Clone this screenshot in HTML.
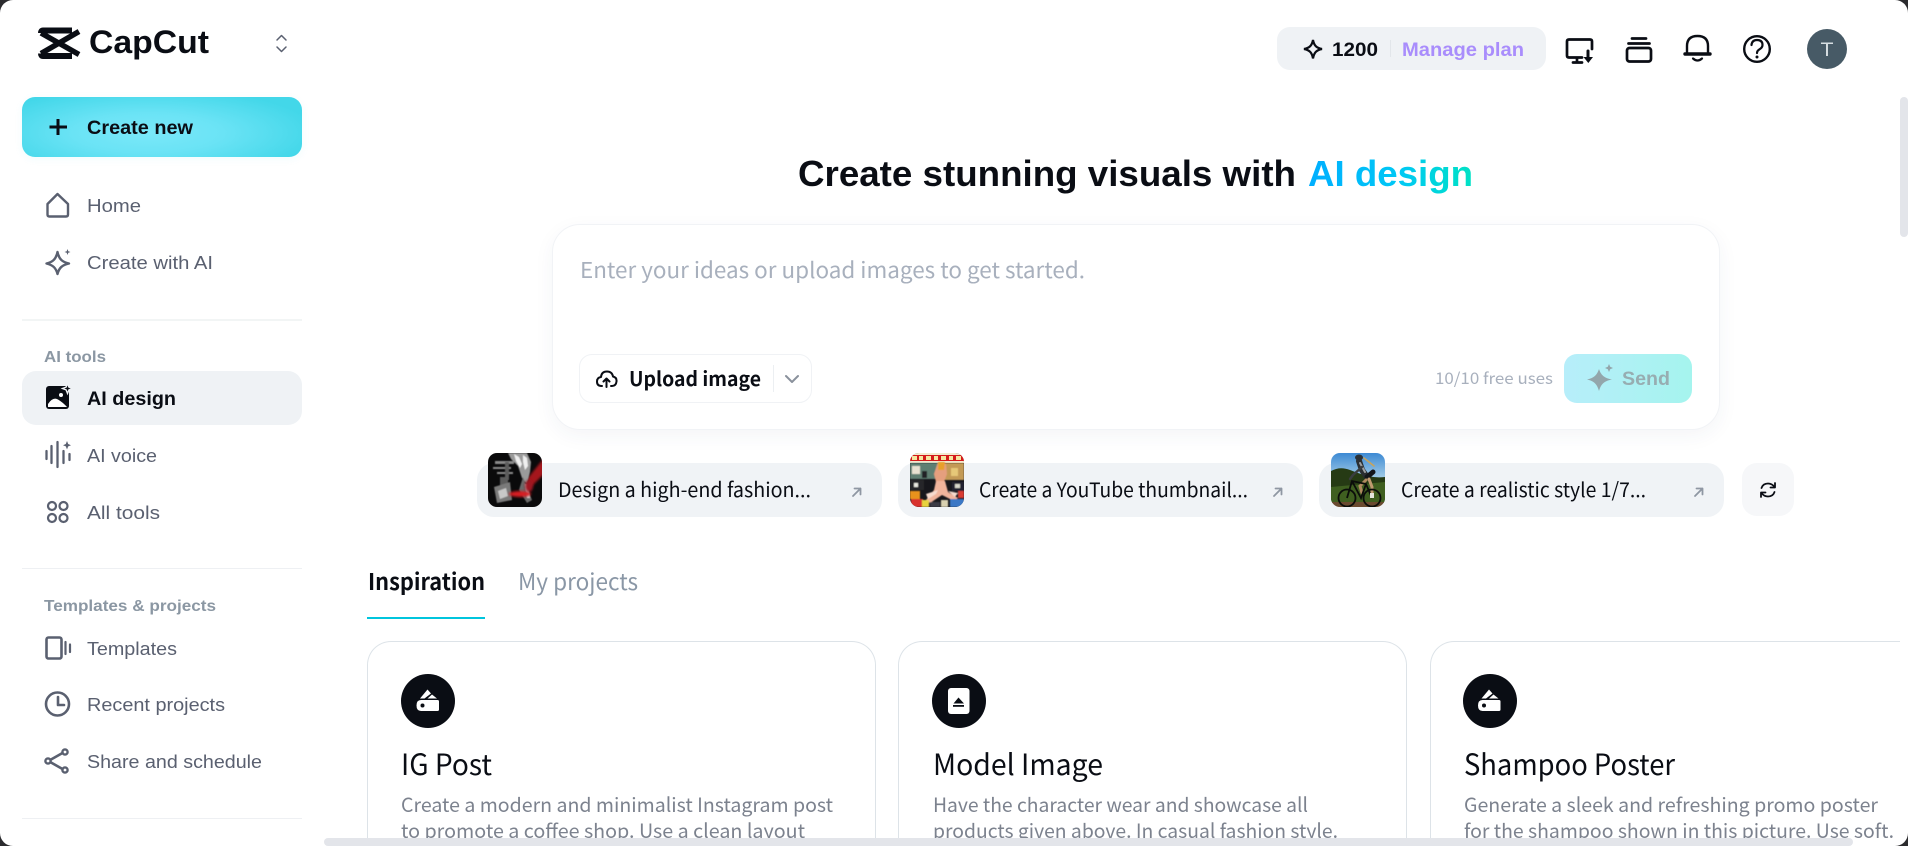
<!DOCTYPE html>
<html lang="en">
<head>
<meta charset="utf-8">
<title>CapCut</title>
<style>
html,body{margin:0;padding:0;width:1908px;height:846px;overflow:hidden;background:#2b2b2e;}
#page{position:absolute;left:0;top:0;width:1908px;height:846px;background:#fff;border-radius:13px;overflow:hidden;font-family:"Liberation Sans",sans-serif;}
.b{position:absolute;box-sizing:border-box;}
svg.o{position:absolute;left:0;top:0;width:1908px;height:846px;display:block;}
text{font-family:"Liberation Sans",sans-serif;}
.n text,text.n{font-family:"Liberation Sans","Noto Sans CJK SC",sans-serif;}
.s text,text.s{font-family:"Noto Sans CJK SC","Liberation Sans",sans-serif;}
.card{border:1px solid #dde3e8;border-bottom:0;border-radius:24px 24px 0 0;height:205px;}
</style>
</head>
<body>
<div id="page">
  <!-- boxes -->
  <div class="b" style="left:22px;top:97px;width:280px;height:60px;border-radius:13px;background:radial-gradient(ellipse 60% 75% at 45% 60%,#7ae8f9 0%,#6ae3f5 45%,#43d7e9 100%);box-shadow:0 2px 8px rgba(70,215,235,.08)"></div>
  <div class="b" style="left:22px;top:319px;width:280px;height:2px;background:#f2f5f5"></div>
  <div class="b" style="left:22px;top:371px;width:280px;height:54px;border-radius:14px;background:#eff2f5"></div>
  <div class="b" style="left:22px;top:568px;width:280px;height:1px;background:#eef0f3"></div>
  <div class="b" style="left:22px;top:818px;width:280px;height:1px;background:#eef0f3"></div>

  <div class="b" style="left:1277px;top:27px;width:269px;height:43px;border-radius:13px;background:#eff2f5"></div>
  <div class="b" style="left:1390px;top:40px;width:1px;height:17px;background:#e2e6ea"></div>
  <div class="b" style="left:1807px;top:29px;width:40px;height:40px;border-radius:50%;background:#475a66"></div>
  <div class="b" style="left:1900px;top:97px;width:8px;height:140px;border-radius:4px;background:#e3e5ea"></div>

  <div class="b" style="left:552px;top:224px;width:1168px;height:206px;border-radius:28px;background:#fff;border:1px solid #f1f3f6;box-shadow:0 6px 20px rgba(30,50,90,.05)"></div>
  <div class="b" style="left:579px;top:354px;width:233px;height:49px;border-radius:13px;background:#fff;border:1px solid #f0f2f5"></div>
  <div class="b" style="left:773px;top:365px;width:1px;height:27px;background:#eceff2"></div>
  <div class="b" style="left:1564px;top:354px;width:128px;height:49px;border-radius:13px;background:linear-gradient(90deg,#b7eefa,#a5f4ee)"></div>

  <div class="b" style="left:477px;top:463px;width:405px;height:54px;border-radius:17px;background:#f0f3f6"></div>
  <div class="b" style="left:898px;top:463px;width:405px;height:54px;border-radius:17px;background:#f0f3f6"></div>
  <div class="b" style="left:1319px;top:463px;width:405px;height:54px;border-radius:17px;background:#f0f3f6"></div>
  <div class="b" style="left:1742px;top:463px;width:52px;height:53px;border-radius:15px;background:#f6f7f9"></div>

  <div class="b" style="left:367px;top:617px;width:118px;height:2px;background:#00c5dd"></div>

  <div class="b card" style="left:367px;top:641px;width:509px"></div>
  <div class="b card" style="left:898px;top:641px;width:509px"></div>
  <div class="b card" style="left:1430px;top:641px;width:470px;border-right:0;border-radius:24px 0 0 0"></div>
  <div class="b" style="left:401px;top:674px;width:54px;height:54px;border-radius:50%;background:#0a0d14"></div>
  <div class="b" style="left:932px;top:674px;width:54px;height:54px;border-radius:50%;background:#0a0d14"></div>
  <div class="b" style="left:1463px;top:674px;width:54px;height:54px;border-radius:50%;background:#0a0d14"></div>

  <svg class="o" viewBox="0 0 1908 846" xmlns="http://www.w3.org/2000/svg">
    <defs>
      <linearGradient id="ai" gradientUnits="userSpaceOnUse" x1="1308" y1="0" x2="1473" y2="0">
        <stop offset="0" stop-color="#00aeff"/><stop offset=".55" stop-color="#00c8f5"/><stop offset="1" stop-color="#00e2c4"/>
      </linearGradient>
      <linearGradient id="sky" x1="0" y1="0" x2="0" y2="1"><stop offset="0" stop-color="#3d8ad4"/><stop offset="1" stop-color="#a6cee6"/></linearGradient>
      <clipPath id="t1"><rect x="488" y="453" width="54" height="54" rx="9"/></clipPath>
      <clipPath id="t2"><rect x="910" y="453" width="54" height="54" rx="9"/></clipPath>
      <clipPath id="t3"><rect x="1331" y="453" width="54" height="54" rx="9"/></clipPath>
      <filter id="bl" x="-30%" y="-30%" width="160%" height="160%"><feGaussianBlur stdDeviation="1.200"/></filter>
      <filter id="bl2" x="-10%" y="-10%" width="120%" height="120%"><feGaussianBlur stdDeviation=".5"/></filter>
    </defs>

    <!-- logo -->
    <g fill="none" stroke="#0a0d14" stroke-width="6" stroke-linecap="butt" stroke-linejoin="round">
      <path d="M72 30.500H43Q41 30.500 41 33"/>
      <path d="M72 56H43Q41 56 41 53.500"/>
      <path d="M41 33L79 54.500" stroke-width="5.400"/>
      <path d="M41 53.500L79 31.500" stroke-width="5.400"/>
    </g>
    <text x="89" y="53" font-size="32" font-weight="700" fill="#0a0d14" textLength="120" lengthAdjust="spacingAndGlyphs">CapCut</text>
    <g fill="none" stroke="#5a6070" stroke-width="1.500" stroke-linecap="round" stroke-linejoin="round">
      <path d="M277 40L281.500 35.500L286 40"/><path d="M277 47L281.500 51.500L286 47"/>
    </g>

    <!-- create new -->
    <path d="M58 119V135M49.500 127H67" stroke="#0a0d14" stroke-width="3" fill="none"/>
    <text x="87" y="134" font-size="19" font-weight="700" fill="#0a0d14" textLength="106" lengthAdjust="spacingAndGlyphs">Create new</text>

    <!-- nav icons -->
    <g fill="none" stroke="#5a6070" stroke-width="2.400" stroke-linejoin="round" stroke-linecap="round">
      <path d="M47.500 204L57.500 194L68 204V214.500Q68 216.500 66 216.500H49.500Q47.500 216.500 47.500 214.500Z"/>
      <path d="M57.500 252C59 259 62 262 69 263.500C62 265 59 268 57.500 274C56 268 53 265 46.500 263.500C53 262 56 259 57.500 252Z"/>
      <path d="M46.500 451V459M51.500 446V463M57.500 442V467M63.500 451V463M69.500 454V460" stroke-width="2.300"/>
      <circle cx="52" cy="506" r="4" stroke-width="2.200"/><circle cx="63.500" cy="506" r="4" stroke-width="2.200"/>
      <circle cx="52" cy="518" r="4" stroke-width="2.200"/><circle cx="63.500" cy="518" r="4" stroke-width="2.200"/>
      <rect x="46.500" y="637.500" width="15" height="21" rx="2" stroke-width="2.600"/>
      <path d="M65.500 642V654M70 644.500V652" stroke-width="2.200"/>
      <circle cx="57.500" cy="704" r="11.500" stroke-width="2.600"/>
      <path d="M58 697V705H64" stroke-width="2.600"/>
      <path d="M51 759.500L62.500 753M51 762.500L62.500 769" stroke-width="2.600"/>
      <circle cx="48" cy="761" r="2.600"/><circle cx="65" cy="752" r="2.600"/><circle cx="65" cy="770" r="2.600"/>
    </g>
    <path d="M67.500 249L68.300 251.200L70.500 252L68.300 252.800L67.500 255L66.700 252.800L64.500 252L66.700 251.200Z" fill="#5a6070"/>
    <path d="M67 441L68.200 444L71 445.200L68.200 446.400L67 449.400L65.800 446.400L63 445.200L65.800 444Z" fill="#5a6070"/>
    <!-- AI design icon -->
    <rect x="46" y="386" width="23" height="23" rx="3" fill="#0a0d14"/>
    <path d="M48 407V404Q53 396.500 58 399.500Q63 402.500 67 407Z" fill="#fff"/>
    <circle cx="61" cy="395" r="2" fill="#fff"/>
    <path d="M67.500 383.500L68.900 387.100L72.500 388.500L68.900 389.900L67.500 393.500L66.100 389.900L62.500 388.500L66.100 387.100Z" fill="#0a0d14" stroke="#eff2f5" stroke-width="1.400"/>

    <!-- nav text -->
    <g fill="#5a6070" font-size="18">
      <text x="87" y="212" textLength="54" lengthAdjust="spacingAndGlyphs">Home</text>
      <text x="87" y="269" textLength="126" lengthAdjust="spacingAndGlyphs">Create with AI</text>
      <text x="87" y="462" textLength="70" lengthAdjust="spacingAndGlyphs">AI voice</text>
      <text x="87" y="519" textLength="73" lengthAdjust="spacingAndGlyphs">All tools</text>
      <text x="87" y="655" textLength="90" lengthAdjust="spacingAndGlyphs">Templates</text>
      <text x="87" y="711" textLength="138" lengthAdjust="spacingAndGlyphs">Recent projects</text>
      <text x="87" y="768" textLength="175" lengthAdjust="spacingAndGlyphs">Share and schedule</text>
    </g>
    <text x="87" y="405" font-size="19" font-weight="700" fill="#0a0d14" textLength="89" lengthAdjust="spacingAndGlyphs">AI design</text>
    <text x="44" y="362" font-size="15.500" font-weight="700" fill="#8b97a3" textLength="62" lengthAdjust="spacingAndGlyphs">AI tools</text>
    <text x="44" y="611" font-size="15.500" font-weight="700" fill="#8b97a3" textLength="172" lengthAdjust="spacingAndGlyphs">Templates &amp; projects</text>

    <!-- top bar -->
    <path d="M1313 40C1314 45.500 1316.500 48 1322 49C1316.500 50 1314 52.500 1313 58.500C1312 52.500 1309.500 50 1304 49C1309.500 48 1312 45.500 1313 40Z" fill="none" stroke="#0a0d14" stroke-width="2.200"/>
    <text x="1332" y="56" font-size="19" font-weight="700" fill="#0a0d14" textLength="46" lengthAdjust="spacingAndGlyphs">1200</text>
    <text x="1402" y="56" font-size="19" font-weight="700" fill="#a98dfc" textLength="122" lengthAdjust="spacingAndGlyphs">Manage plan</text>
    <g fill="none" stroke="#0a0d14" stroke-width="2.700" stroke-linejoin="round" stroke-linecap="round">
      <path d="M1582 57.500H1569Q1567 57.500 1567 55.500V41.500Q1567 39.500 1569 39.500H1590Q1592 39.500 1592 41.500V49"/>
      <path d="M1573 62.500H1582M1577 58V62"/>
      <path d="M1588 51V58" stroke-width="3"/>
      <path d="M1632 38.500H1646M1628.500 43.500H1649.500"/>
      <rect x="1627" y="48" width="24" height="13.500" rx="2.500"/>
      <path d="M1687 53V46Q1687 36 1697.500 36Q1708 36 1708 46V53" stroke-width="2.400"/>
      <path d="M1685 54H1710" stroke-width="3.400"/>
      <path d="M1693 58.500Q1697.500 62.500 1702 58.500" stroke-width="2.200"/>
      <circle cx="1757" cy="49" r="12.800" stroke-width="2.400"/>
      <path d="M1751.500 45Q1752 40 1757 40Q1762.500 40 1762.500 45Q1762.500 47.500 1759.500 49.300Q1757 50.800 1757 53" stroke-width="2.200"/>
    </g>
    <path d="M1583.500 57H1593L1588.300 63Z" fill="#0a0d14"/>
    <circle cx="1757" cy="57" r="1.500" fill="#0a0d14"/>
    <text x="1820.500" y="56" font-size="19" fill="#d6dde1" textLength="13" lengthAdjust="spacingAndGlyphs">T</text>

    <!-- heading -->
    <text x="798" y="186" font-size="36" font-weight="700" fill="#0a0d14" textLength="498" lengthAdjust="spacingAndGlyphs">Create stunning visuals with</text>
    <text x="1308" y="186" font-size="36" font-weight="700" fill="url(#ai)" textLength="165" lengthAdjust="spacingAndGlyphs">AI design</text>

    <!-- input -->
    <text class="s" x="580" y="278" font-size="22" fill="#a8b0bd" textLength="505" lengthAdjust="spacingAndGlyphs">Enter your ideas or upload images to get started.</text>
    <g fill="none" stroke="#0a0d14" stroke-width="2" stroke-linecap="round" stroke-linejoin="round">
      <path d="M602 386H601.500Q597 386 597 381.500Q597 377.500 601 377Q601.500 371.500 607 371.500Q612 371.500 613 376.500Q617 377.500 616.500 381.500Q616 386 612 386H611"/>
      <path d="M606.500 387V379M603.500 381.500L606.500 378.500L609.500 381.500"/>
    </g>
    <text class="s" x="629" y="386" font-size="20" font-weight="700" fill="#0a0d14" textLength="132" lengthAdjust="spacingAndGlyphs">Upload image</text>
    <path d="M786 376L792 382L798 376" fill="none" stroke="#8a919c" stroke-width="2" stroke-linecap="round" stroke-linejoin="round"/>
    <text class="s" x="1435" y="384" font-size="16" fill="#a8b0bd" textLength="118" lengthAdjust="spacingAndGlyphs">10/10 free uses</text>
    <path d="M1599 369C1601 375 1604 378 1612 379.500C1604 381 1601 384 1599 391C1597 384 1594 381 1587 379.500C1594 378 1597 375 1599 369Z" fill="#93a6ab"/>
    <path d="M1609 364L1610.200 366.800L1613 368L1610.200 369.200L1609 372L1607.800 369.200L1605 368L1607.800 366.800Z" fill="#93a6ab"/>
    <text x="1622" y="385" font-size="19" font-weight="700" fill="#97adb1" textLength="48" lengthAdjust="spacingAndGlyphs">Send</text>

    <!-- thumb 1 -->
    <g clip-path="url(#t1)">
      <rect x="488" y="453" width="54" height="54" fill="#0a0a0b"/>
      <path d="M527 479L544 458V474L531 487Z" fill="#a5161d" filter="url(#bl)"/>
      <g filter="url(#bl2)">
        <path d="M508 453L527 453L531 462L530 472L527 484L522 478L518 466L511 459Z" fill="#9a9a9a"/>
        <path d="M514 454L519 457L522 464L520 468L516 461ZM523 455L527 458L528 466L525 470L523 462Z" fill="#f0f0f0"/>
        <path d="M495 461H514V464H495ZM493 467H511V469H493ZM497 472H513V474H497Z" fill="#8a8a8a"/>
        <path d="M500 477H508V486H500ZM505 462H509V480H505Z" fill="#5c5c5c"/>
        <path d="M494 487L510 482L512 500L497 503Z" fill="#7a7a7a"/>
        <path d="M498 491L506 488L508 496L500 499Z" fill="#c8c8c8"/>
        <path d="M523 477L532 500L527 503L519 490Z" fill="#6a6a6a"/>
        <path d="M525 484L528 484L530 498L527 498Z" fill="#d0d0d0"/>
      </g>
      <ellipse cx="520" cy="494" rx="11" ry="3" fill="#d81c24" filter="url(#bl)"/>
      <ellipse cx="529" cy="486" rx="4" ry="6" fill="#a01820" filter="url(#bl)"/>
    </g>
    <!-- thumb 2 -->
    <g clip-path="url(#t2)">
      <rect x="910" y="453" width="54" height="54" fill="#17171c"/>
      <rect x="910" y="453" width="54" height="10" fill="#f2ead0"/>
      <rect x="910" y="455" width="54" height="6" fill="#d41a1a"/>
      <path d="M912 456h5v4h-5zM919 456h4v4h-4zM926 456h5v4h-5zM934 456h4v4h-4zM941 456h5v4h-5zM949 456h4v4h-4zM956 456h5v4h-5z" fill="#f6e6a0"/>
      <g filter="url(#bl2)">
        <rect x="910" y="463" width="54" height="16" fill="#5e7f72"/>
        <path d="M944 463H964V480H944Z" fill="#c39a56"/>
        <rect x="912" y="466" width="8" height="8" fill="#e8e2d2"/>
        <rect x="922" y="471" width="5" height="7" fill="#202028"/>
        <rect x="951" y="468" width="7" height="8" fill="#e6c878"/>
        <path d="M938 462L946 464L947 474L944 482L936 482L934 474Z" fill="#e59f7e"/>
        <path d="M938 462L945 462L944 470L938 470Z" fill="#e8a02c"/>
        <path d="M936 481L945 481L948 492L958 498L954 501L942 495L930 503L926 500L934 490Z" fill="#f0b49c"/>
        <path d="M926 494L938 490L936 494L928 499ZM948 491L958 493L955 497Z" fill="#f6dace"/>
        <rect x="910" y="480" width="14" height="10" fill="#26262c"/>
        <rect x="914" y="483" width="4" height="4" fill="#e8e8e0"/>
        <rect x="952" y="482" width="12" height="9" fill="#202433"/>
        <rect x="955" y="484" width="5" height="4" fill="#d8d8cc"/>
        <rect x="910" y="491" width="10" height="8" fill="#e8921a"/>
        <rect x="911" y="499" width="12" height="8" fill="#d8302e"/>
        <rect x="922" y="500" width="7" height="7" fill="#e8d23e"/>
        <rect x="930" y="502" width="10" height="5" fill="#3a3a44"/>
        <rect x="941" y="500" width="7" height="7" fill="#d8d0b0"/>
        <rect x="950" y="499" width="14" height="8" fill="#3a78c6"/>
        <rect x="958" y="491" width="6" height="7" fill="#d83a30"/>
      </g>
    </g>
    <!-- thumb 3 -->
    <g clip-path="url(#t3)">
      <rect x="1331" y="453" width="54" height="26" fill="url(#sky)"/>
      <path d="M1331 471Q1340 466 1350 470Q1360 474 1368 476Q1376 478 1385 477V503H1331Z" fill="#263a14"/>
      <path d="M1331 487L1385 482V503H1331Z" fill="#3f5f20"/>
      <rect x="1331" y="502" width="54" height="5" fill="#6a4a30"/>
      <g stroke-linecap="round">
        <path d="M1359 461L1362 470L1367 477" stroke="#2a2e32" stroke-width="6" fill="none"/>
        <path d="M1360 463L1365 472" stroke="#9da0a2" stroke-width="2" fill="none"/>
        <path d="M1362 467L1353 475L1350 479" stroke="#3a3d40" stroke-width="2.400" fill="none"/>
        <path d="M1367 477L1373 472" stroke="#14161a" stroke-width="5" fill="none"/>
        <path d="M1369 479L1372 487L1372 495" stroke="#c09a70" stroke-width="3" fill="none"/>
        <path d="M1366 480L1360 486L1362 493" stroke="#b08a60" stroke-width="3" fill="none"/>
        <path d="M1364 458L1374 466" stroke="#c8a45c" stroke-width="1.600" fill="none"/>
      </g>
      <ellipse cx="1359" cy="457.500" rx="4" ry="3" fill="#2a3036"/>
      <circle cx="1347" cy="498" r="8.500" fill="none" stroke="#0b0d0a" stroke-width="1.800"/>
      <circle cx="1372" cy="498" r="8.500" fill="none" stroke="#0b0d0a" stroke-width="1.800"/>
      <path d="M1347 498L1352 481L1366 484L1372 498M1352 481L1361 498L1366 484" stroke="#0b0d0a" stroke-width="1.800" fill="none"/>
      <rect x="1370" y="493" width="4" height="5" fill="#e4e4dc"/>
    </g>

    <!-- chips -->
    <g class="s" font-size="20" fill="#0a0d14">
      <text x="558" y="497" textLength="253" lengthAdjust="spacingAndGlyphs">Design a high-end fashion...</text>
      <text x="979" y="497" textLength="269" lengthAdjust="spacingAndGlyphs">Create a YouTube thumbnail...</text>
      <text x="1401" y="497" textLength="245" lengthAdjust="spacingAndGlyphs">Create a realistic style 1/7...</text>
    </g>
    <g fill="none" stroke="#8f97a3" stroke-width="1.800" stroke-linecap="round" stroke-linejoin="round">
      <path d="M853 496L860.500 488.500M854.500 488.500H860.500V494.500"/>
      <path d="M1274 496L1281.500 488.500M1275.500 488.500H1281.500V494.500"/>
      <path d="M1695 496L1702.500 488.500M1696.500 488.500H1702.500V494.500"/>
    </g>
    <g fill="none" stroke="#0a0d14" stroke-width="1.800" stroke-linecap="round" stroke-linejoin="round">
      <path d="M1761.500 488Q1763 483.500 1768 483.500Q1772 483.500 1774.500 487"/>
      <path d="M1774.500 492Q1773 496.500 1768 496.500Q1764 496.500 1761.500 493"/>
      <path d="M1775 483V487.500H1770.500M1761 497V492.500H1765.500"/>
    </g>

    <!-- tabs -->
    <text class="s" x="368" y="590" font-size="23" font-weight="700" fill="#0a0d14" textLength="117" lengthAdjust="spacingAndGlyphs">Inspiration</text>
    <text class="s" x="518" y="590" font-size="23" fill="#8a97a6" textLength="120" lengthAdjust="spacingAndGlyphs">My projects</text>

    <!-- card icons -->
    <g fill="#fff">
      <path d="M421 700H437.500Q439 700 439 701.500V709.500Q439 711 437.500 711H421Q416.500 711 416.500 705.500Q416.500 700 421 700Z"/>
      <path d="M420 698.500L427.500 689.500L431 693.500L424.500 698.500Z"/>
      <path d="M427.500 698.500L432 694.500L437 698.500Z"/>
      <rect x="948" y="688" width="21.500" height="26" rx="3"/>
      <path d="M1484 700H1500.500Q1502 700 1502 701.500V709.500Q1502 711 1500.500 711H1484Q1479.500 711 1479.500 705.500Q1479.500 700 1484 700Z" transform="translate(-1.500 0)"/>
      <path d="M1481.500 698.500L1489 689.500L1492.500 693.500L1486 698.500Z"/>
      <path d="M1489 698.500L1493.500 694.500L1498.500 698.500Z"/>
    </g>
    <circle cx="422.500" cy="705.500" r="2" fill="#0a0d14"/>
    <circle cx="1484" cy="705.500" r="2" fill="#0a0d14"/>
    <path d="M958.500 697.500L964 703.500H953.500Z" fill="#0a0d14"/>
    <rect x="953" y="705" width="11" height="1.800" fill="#0a0d14"/>

    <!-- card text -->
    <g class="s" font-size="29" fill="#0a0d14">
      <text x="401" y="775" textLength="91" lengthAdjust="spacingAndGlyphs">IG Post</text>
      <text x="933" y="775" textLength="170" lengthAdjust="spacingAndGlyphs">Model Image</text>
      <text x="1464" y="775" textLength="211" lengthAdjust="spacingAndGlyphs">Shampoo Poster</text>
    </g>
    <g class="s" font-size="19.500" fill="#7c828e">
      <text x="401" y="812" textLength="432" lengthAdjust="spacingAndGlyphs">Create a modern and minimalist Instagram post</text>
      <text x="401" y="838" textLength="404" lengthAdjust="spacingAndGlyphs">to promote a coffee shop. Use a clean layout</text>
      <text x="933" y="812" textLength="375" lengthAdjust="spacingAndGlyphs">Have the character wear and showcase all</text>
      <text x="933" y="838" textLength="405" lengthAdjust="spacingAndGlyphs">products given above. In casual fashion style.</text>
      <text x="1464" y="812" textLength="414" lengthAdjust="spacingAndGlyphs">Generate a sleek and refreshing promo poster</text>
      <text x="1464" y="838" textLength="430" lengthAdjust="spacingAndGlyphs">for the shampoo shown in this picture. Use soft.</text>
    </g>
  </svg>

  <div class="b" style="left:324px;top:838px;width:1529px;height:8px;border-radius:4px;background:#e3e5ea"></div>
</div>
</body>
</html>
